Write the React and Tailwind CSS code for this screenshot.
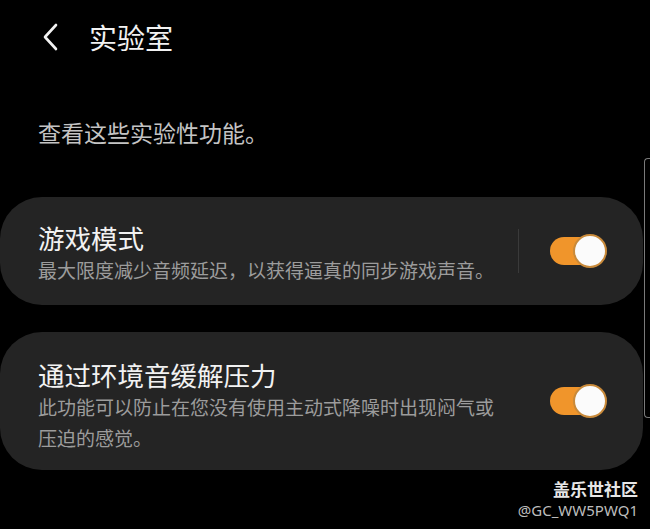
import React, { useState } from 'react'

const font = { fontFamily: '"Noto Sans CJK SC", "Noto Sans", sans-serif' }

function Toggle({ on, onClick }) {
  return (
    <button
      type="button"
      onClick={onClick}
      className="relative w-[58px] h-[36px] flex items-center shrink-0"
    >
      <span className={`ml-[1px] w-[50px] h-[28px] rounded-full ${on ? 'bg-[#f0952b]' : 'bg-[#555]'}`} />
      <span
        className={`absolute top-[1px] w-[34px] h-[34px] rounded-full bg-[#fbfbfb] border-2 border-[#c98a3a] ${on ? 'left-[24px]' : 'left-0'}`}
      />
    </button>
  )
}

function Card({ title, desc, divider, on, onToggle, h, shift }) {
  return (
    <div className={`w-[643px] rounded-[42px] bg-[#242424] flex items-center pl-[38px] pr-[36px] ${h}`}>
      <div className={`w-[470px] ${shift}`}>
        <div className="text-[26.5px] leading-[32px] text-[#f2f2f2]">{title}</div>
        <div className="text-[19px] leading-[31px] text-[#9c9c9c]">{desc}</div>
      </div>
      <div className="flex-1 flex items-center">
        {divider ? <div className="ml-[10px] w-px h-[44px] bg-[#3a3a3a]" /> : <div className="w-px" />}
      </div>
      <Toggle on={on} onClick={onToggle} />
    </div>
  )
}

export default function App() {
  const [game, setGame] = useState(true)
  const [ambient, setAmbient] = useState(true)

  return (
    <div className="relative w-[650px] h-[529px] bg-black overflow-hidden" style={font}>
      <div className="h-[74px] flex items-center pl-[42px]">
        <svg width="18" height="28" viewBox="0 0 18 28" fill="none">
          <path d="M14 2 L3 14 L14 26" stroke="#f2f2f2" strokeWidth="2.6" strokeLinecap="round" strokeLinejoin="round" />
        </svg>
        <span className="ml-[29px] text-[28px] leading-[34px] text-[#f2f2f2]">实验室</span>
      </div>

      <div className="mt-[43px] pl-[38px] text-[23px] leading-[30px] text-[#c4c4c4]">
        查看这些实验性功能。
      </div>

      <div className="mt-[50px] flex flex-col gap-[27px]">
        <Card
          title="游戏模式"
          desc="最大限度减少音频延迟，以获得逼真的同步游戏声音。"
          divider
          on={game}
          onToggle={() => setGame(!game)}
          h="h-[108px]"
          shift="mt-[4px]"
        />
        <Card
          title="通过环境音缓解压力"
          desc="此功能可以防止在您没有使用主动式降噪时出现闷气或压迫的感觉。"
          on={ambient}
          onToggle={() => setAmbient(!ambient)}
          h="h-[138px]"
          shift="mt-[10px]"
        />
      </div>

      <div className="absolute right-0 top-[158px] w-[6px] h-[260px] rounded-l-[4px] border border-r-0 border-[#7a7a7a]" />

      <div className="absolute right-[12px] bottom-[9px] flex flex-col items-end">
        <span className="text-[17px] leading-[22px] font-bold text-[#e6e6e6]">盖乐世社区</span>
        <span className="text-[15px] leading-[20px] text-[#bdbdbd]" style={{ fontFamily: '"Noto Sans", sans-serif' }}>@GC_WW5PWQ1</span>
      </div>
    </div>
  )
}
